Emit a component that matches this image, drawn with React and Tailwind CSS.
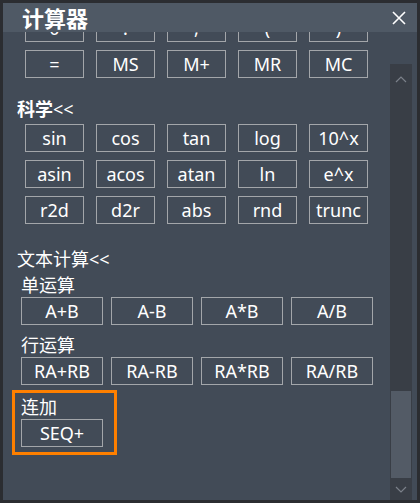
import React from "react";

const font = { fontFamily: '"Noto Sans", "Noto Sans CJK SC", sans-serif' };

function Btn({ label, wide }) {
  return (
    <div
      className={`${wide ? "w-[82px]" : "w-[59px]"} h-[28px] shrink-0 border border-[#a3a6aa] flex items-center justify-center text-white text-[18px] leading-none`}
    >
      {label}
    </div>
  );
}

function CalcRow({ items }) {
  return (
    <div className="flex gap-[12px] pl-[22px]">
      {items.map((t, i) => (
        <Btn key={i} label={t} />
      ))}
    </div>
  );
}

function TextRow({ items }) {
  return (
    <div className="flex gap-[8px]">
      {items.map((t, i) => (
        <Btn key={i} label={t} wide />
      ))}
    </div>
  );
}

export default function App() {
  return (
    <div
      className="w-[420px] h-[503px] bg-[#2b2d31] p-[3px] flex flex-col overflow-hidden"
      style={font}
    >
      {/* title bar */}
      <div className="h-[29px] shrink-0 bg-[#4f5965] flex items-center justify-between pl-[19px] pr-[11px] relative z-10">
        <span className="text-white text-[22px] font-bold leading-none">计算器</span>
        <svg width="14" height="14" viewBox="0 0 14 14" className="mt-[1px]">
          <path d="M1 1 L13 13 M13 1 L1 13" stroke="#fff" strokeWidth="1.6" fill="none" />
        </svg>
      </div>

      {/* body */}
      <div className="flex-1 flex bg-[#424b57] overflow-hidden">
        <div className="flex-1 overflow-hidden">
          <div className="-mt-[18px] flex flex-col">
            <div className="flex flex-col gap-[8px]">
              <CalcRow items={["0", ".", ",", "(", ")"]} />
              <CalcRow items={["=", "MS", "M+", "MR", "MC"]} />
            </div>

            <div className="mt-[19px] h-[24px] leading-[24px] pl-[14px] text-white text-[18px] font-bold">
              科学<span className="font-normal">&lt;&lt;</span>
            </div>
            <div className="mt-[3px] flex flex-col gap-[8px]">
              <CalcRow items={["sin", "cos", "tan", "log", "10^x"]} />
              <CalcRow items={["asin", "acos", "atan", "ln", "e^x"]} />
              <CalcRow items={["r2d", "d2r", "abs", "rnd", "trunc"]} />
            </div>

            <div className="mt-[23px] h-[24px] leading-[24px] pl-[14px] text-white text-[18px]">
              文本计算&lt;&lt;
            </div>
            <div className="pl-[18px] flex flex-col">
              <div className="mt-[2px] h-[24px] leading-[24px] text-white text-[18px]">单运算</div>
              <TextRow items={["A+B", "A-B", "A*B", "A/B"]} />
              <div className="mt-[8px] h-[24px] leading-[24px] text-white text-[18px]">行运算</div>
              <TextRow items={["RA+RB", "RA-RB", "RA*RB", "RA/RB"]} />
            </div>

            <div className="mt-[5px] ml-[9px] w-[105px] border-[3px] border-[#ff8000] pl-[6px] pt-[2px] pb-[5px]">
              <div className="h-[24px] leading-[24px] text-white text-[18px]">连加</div>
              <Btn label="SEQ+" wide />
            </div>
          </div>
        </div>

        {/* scrollbar */}
        <div className="w-[22px] mt-[32px] mr-[5px] bg-[#393e46] flex flex-col">
          <div className="h-[30px] flex items-center justify-center">
            <svg width="12" height="7" viewBox="0 0 12 7">
              <path d="M1 6 L6 1 L11 6" stroke="#7b818a" strokeWidth="1.2" fill="none" />
            </svg>
          </div>
          <div className="flex-1 flex flex-col justify-end px-[1px]">
            <div className="h-[87px] bg-[#535b66]" />
          </div>
          <div className="h-[22px] flex items-center justify-center">
            <svg width="12" height="7" viewBox="0 0 12 7">
              <path d="M1 1 L6 6 L11 1" stroke="#7b818a" strokeWidth="1.2" fill="none" />
            </svg>
          </div>
        </div>
      </div>
    </div>
  );
}
